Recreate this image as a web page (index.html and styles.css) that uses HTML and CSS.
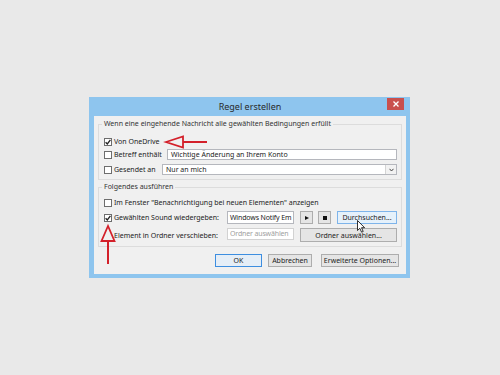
FILE: index.html
```html
<!DOCTYPE html>
<html>
<head>
<meta charset="utf-8">
<link rel="stylesheet" href="styles.css">
</head>
<body>
<div class="dialog">
  <div class="titlebar">
    <span></span>
    <span class="title">Regel erstellen</span>
    <span class="close"><svg width="6" height="6" viewBox="0 0 6 6"><path d="M0.5 0.5 L5.5 5.5 M5.5 0.5 L0.5 5.5" stroke="#fff" stroke-width="1.3"/></svg></span>
  </div>
  <div class="client">
    <fieldset class="group g1">
      <legend>Wenn eine eingehende Nachricht alle gewählten Bedingungen erfüllt</legend>
      <div class="row r1"><span class="cb"><svg width="6" height="6" viewBox="0 0 6 6"><path d="M0.6 3.2 L2.3 5 L5.4 0.8" fill="none" stroke="#222" stroke-width="1.3"/></svg></span><span class="lbl">Von OneDrive</span></div>
      <div class="row r2"><span class="cb"></span><span class="lbl w-betreff">Betreff enthält</span><span class="input grow">Wichtige Änderung an Ihrem Konto</span></div>
      <div class="row r3"><span class="cb"></span><span class="lbl w-gesendet">Gesendet an</span><span class="select grow"><span class="sel-text">Nur an mich</span><span class="sel-btn"><svg width="5" height="4" viewBox="0 0 5 4"><path d="M0.5 0.8 L2.5 3 L4.5 0.8" fill="none" stroke="#444" stroke-width="1"/></svg></span></span></div>
    </fieldset>
    <fieldset class="group g2">
      <legend>Folgendes ausführen</legend>
      <div class="row ra"><span class="cb"></span><span class="lbl">Im Fenster "Benachrichtigung bei neuen Elementen" anzeigen</span></div>
      <div class="row rb"><span class="cb"><svg width="6" height="6" viewBox="0 0 6 6"><path d="M0.6 3.2 L2.3 5 L5.4 0.8" fill="none" stroke="#222" stroke-width="1.3"/></svg></span><span class="lbl w-sound">Gewählten Sound wiedergeben:</span><span class="input w-field">Windows Notify Em</span><span class="btn sq"><span class="play"></span></span><span class="btn sq"><span class="stop"></span></span><span class="btn hover grow">Durchsuchen...</span></div>
      <div class="row rc"><span class="cb blank"></span><span class="lbl w-sound">Element in Ordner verschieben:</span><span class="input w-field disabled">Ordner auswählen</span><span class="btn grow tall">Ordner auswählen...</span></div>
    </fieldset>
    <div class="buttons">
      <span class="btn default b-ok">OK</span>
      <span class="btn b-cancel">Abbrechen</span>
      <span class="btn b-adv">Erweiterte Optionen...</span>
    </div>
  </div>
</div>
<svg class="arrow-h" width="52" height="20" viewBox="0 0 52 20"><path d="M6 10 L23 4.5 L23 15.5 Z" fill="none" stroke="#d3202a" stroke-width="1.8" stroke-linejoin="miter"/><path d="M23 10 L47 10" stroke="#d3202a" stroke-width="2"/></svg>
<svg class="arrow-v" width="20" height="48" viewBox="0 0 20 48"><path d="M10 6 L3.5 21 L16.5 21 Z" fill="none" stroke="#d3202a" stroke-width="1.8"/><path d="M10 21 L10 44" stroke="#d3202a" stroke-width="2"/></svg>
<svg class="cursor" width="9" height="13" viewBox="0 0 9 13"><path d="M0.5 0.5 L0.5 10.5 L2.8 8.3 L4.6 12.2 L6.2 11.5 L4.5 7.7 L7.6 7.7 Z" fill="#fff" stroke="#000" stroke-width="0.8"/></svg>
</body>
</html>
```
FILE: styles.css
```css
html, body {
  margin: 0;
  padding: 0;
}
body {
  width: 500px;
  height: 375px;
  background: #e9e9e9;
  overflow: hidden;
  position: relative;
  font-family: "Noto Sans", "Open Sans", sans-serif;
  font-size: 7px;
  color: #222;
}
.dialog {
  margin: 97px 0 0 89px;
  width: 321px;
  height: 181px;
  box-sizing: border-box;
  background: #8ec5ee;
  padding: 0 4px 4px 5px;
}
.titlebar {
  height: 19px;
  display: grid;
  grid-template-columns: 1fr auto 1fr;
  align-items: start;
}
.title {
  font-size: 9px;
  line-height: 19px;
  color: #2a2a2a;
}
.close {
  justify-self: end;
  margin: 1px 2px 0 0;
  width: 17px;
  height: 12px;
  background: #c9504d;
  display: flex;
  align-items: center;
  justify-content: center;
}
.close svg { display: block; }
.client {
  height: 158px;
  box-sizing: border-box;
  background: #f0f0f0;
  padding-top: 3px;
}
.group {
  margin: 0 4px;
  border: 1px solid #dcdcdc;
  padding: 6px 4px 3px 5px;
  min-width: 0;
}
.group legend {
  padding: 0 2px;
  margin-left: -2px;
  line-height: 10px;
  color: #333;
}
.g2 {
  margin-top: 2px;
  padding-top: 4px;
  padding-bottom: 4px;
}
.row {
  display: flex;
  align-items: center;
  height: 13px;
}
.r3 { margin-top: 2px; }
.rb { margin-top: 2px; }
.rc { margin-top: 4px; height: 14px; }
.cb {
  width: 8px;
  height: 8px;
  box-sizing: border-box;
  border: 1px solid #6d6d6d;
  background: #fff;
  margin-right: 2px;
  flex: none;
  display: flex;
  align-items: center;
  justify-content: center;
}
.cb svg { display: block; }
.cb.blank { visibility: hidden; }
.lbl {
  white-space: nowrap;
  flex: none;
}
.w-betreff { width: 53px; }
.w-gesendet { width: 48px; }
.w-sound { width: 113px; }
.grow { flex: 1; min-width: 0; }
.input {
  height: 12px;
  box-sizing: border-box;
  border: 1px solid #b5b7bd;
  background: #fff;
  padding-left: 3px;
  line-height: 10px;
  white-space: nowrap;
  overflow: hidden;
}
.r2 .input { height: 11px; line-height: 9px; }
.w-field {
  width: 67px;
  flex: none;
  height: 13px;
  line-height: 11px;
  margin-right: 6px;
  padding-left: 2px;
  letter-spacing: -0.15px;
}
.disabled {
  color: #a0a0a0;
  border-color: #d2d2d2;
  height: 12px;
  line-height: 10px;
  align-self: flex-start;
}
.select {
  height: 11px;
  box-sizing: border-box;
  border: 1px solid #b5b7bd;
  background: #fff;
  display: flex;
  align-items: stretch;
}
.sel-text {
  flex: 1;
  padding-left: 3px;
  line-height: 9px;
}
.sel-btn {
  width: 10px;
  border-left: 1px solid #d4d4d4;
  background: #f2f2f2;
  display: flex;
  align-items: center;
  justify-content: center;
}
.sel-btn svg { display: block; }
.btn {
  height: 13px;
  box-sizing: border-box;
  border: 1px solid #adadad;
  background: #e5e5e5;
  display: flex;
  align-items: center;
  justify-content: center;
  white-space: nowrap;
  color: #222;
}
.btn.tall { height: 14px; }
.btn.sq {
  width: 13px;
  flex: none;
  margin-right: 5px;
}
.btn.sq + .btn.sq { margin-right: 6px; }
.btn.hover {
  border-color: #7eb4ea;
  background: #e5f1fb;
}
.play {
  width: 0;
  height: 0;
  border-left: 4px solid #111;
  border-top: 2.5px solid transparent;
  border-bottom: 2.5px solid transparent;
  margin-left: 1px;
}
.stop {
  width: 4px;
  height: 4px;
  background: #111;
}
.buttons {
  display: flex;
  justify-content: flex-end;
  margin-top: 7px;
  padding-right: 7px;
}
.b-ok { width: 47px; }
.b-cancel { width: 44px; margin-left: 6px; }
.b-adv { width: 78px; margin-left: 9px; }
.btn.default {
  border-color: #3d8ee0;
  background: #e5eef7;
}
.arrow-h {
  position: absolute;
  left: 160px;
  top: 132px;
}
.arrow-v {
  position: absolute;
  left: 98px;
  top: 220px;
}
.cursor {
  position: absolute;
  left: 357px;
  top: 220px;
}
```
